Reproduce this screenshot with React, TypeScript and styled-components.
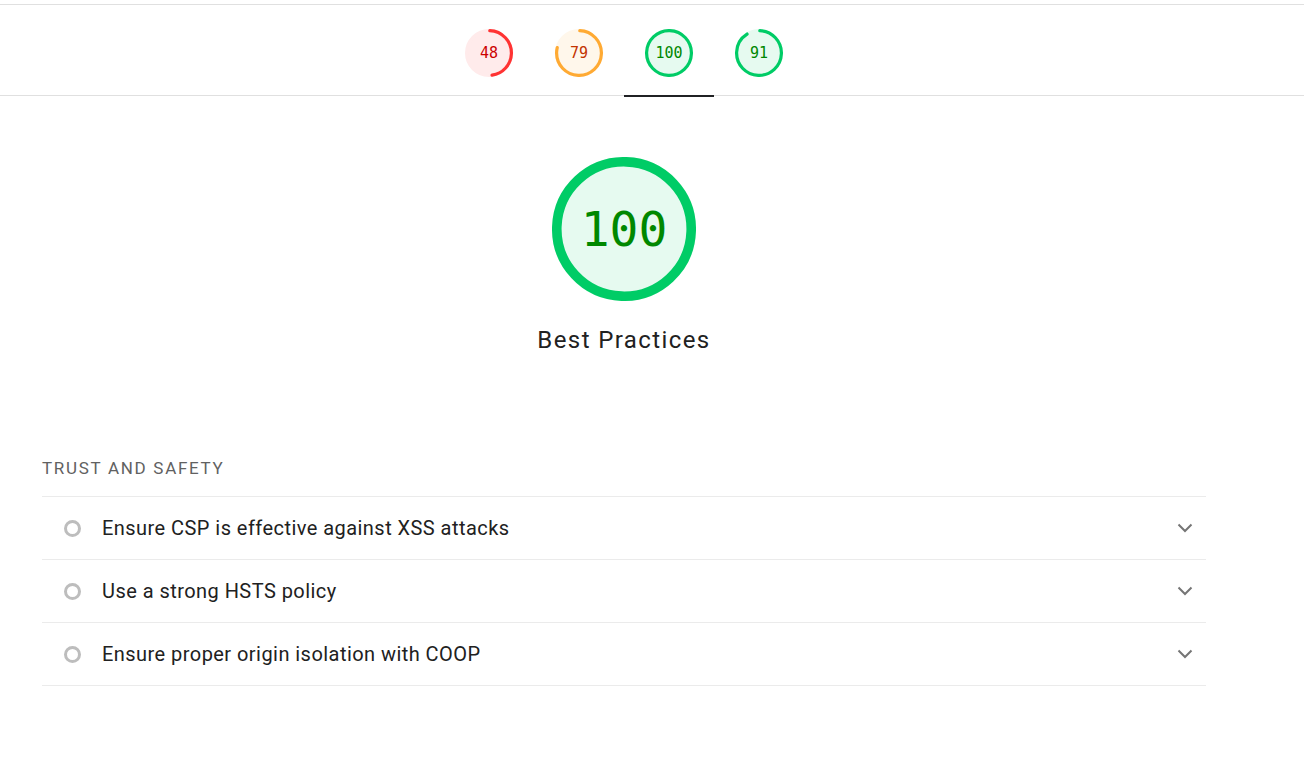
import React from "react";
import styled, { createGlobalStyle } from "styled-components";

const GlobalStyle = createGlobalStyle`
  html, body { margin: 0; padding: 0; background: #ffffff; }
  body { font-family: Roboto, "Liberation Sans", Arial, sans-serif; color: #212121; }
  * { box-sizing: border-box; }
`;

type Rating = "fail" | "average" | "pass";

const palette: Record<Rating, { arc: string; text: string; fill: string }> = {
  fail: { arc: "#ff3333", text: "#cc0000", fill: "#ffebeb" },
  average: { arc: "#ffaa33", text: "#c33300", fill: "#fff7eb" },
  pass: { arc: "#00cc66", text: "#008800", fill: "#e6faf0" },
};

const rate = (s: number): Rating => (s >= 90 ? "pass" : s >= 50 ? "average" : "fail");

const Page = styled.div`
  width: 100%;
  min-height: 774px;
  background: #ffffff;
`;

const TopRule = styled.div`
  height: 5px;
  border-bottom: 1px solid #e0e0e0;
`;

const StickyHeader = styled.header`
  height: 91px;
  border-bottom: 1px solid #e0e0e0;
`;

const HeaderInner = styled.nav`
  width: 1164px;
  margin-left: 42px;
  height: 90px;
  display: flex;
  justify-content: center;
`;

const Tab = styled.a<{ $active?: boolean }>`
  position: relative;
  width: 90px;
  height: 90px;
  display: flex;
  justify-content: center;
  padding-top: 24px;
  text-decoration: none;
  &::after {
    content: "";
    position: absolute;
    left: 0;
    right: 0;
    bottom: -2px;
    height: 2px;
    background: ${(p) => (p.$active ? "#202124" : "transparent")};
  }
`;

const GaugeWrap = styled.div<{ $size: number }>`
  position: relative;
  width: ${(p) => p.$size}px;
  height: ${(p) => p.$size}px;
  flex: none;
`;

const GaugeSvg = styled.svg`
  display: block;
  width: 100%;
  height: 100%;
`;

const GaugeLabel = styled.div<{ $color: string; $font: number }>`
  position: absolute;
  inset: 0;
  display: flex;
  align-items: center;
  justify-content: center;
  font-family: "DejaVu Sans Mono", "Liberation Mono", monospace;
  font-size: ${(p) => p.$font}px;
  color: ${(p) => p.$color};
  line-height: 1;
`;

function Gauge({ score, size, font }: { score: number; size: number; font: number }) {
  const c = palette[rate(score)];
  const r = 56;
  const sw = 8;
  const circ = 2 * Math.PI * r;
  const adj = (0.25 * sw) / circ;
  let arc = (score / 100) * circ - sw / 2;
  if (score === 100) arc = circ;
  return (
    <GaugeWrap $size={size}>
      <GaugeSvg viewBox="0 0 120 120">
        <circle cx="60" cy="60" r={r} fill={c.fill} stroke={c.fill} strokeWidth={sw} />
        <circle
          cx="60"
          cy="60"
          r={r}
          fill="none"
          stroke={c.arc}
          strokeWidth={sw}
          strokeLinecap={score === 100 ? "butt" : "round"}
          strokeDasharray={`${Math.max(arc, 0)} ${circ}`}
          transform={`rotate(${-90 + adj * 360} 60 60)`}
        />
      </GaugeSvg>
      <GaugeLabel $color={c.text} $font={font}>
        {score}
      </GaugeLabel>
    </GaugeWrap>
  );
}

const Main = styled.main`
  width: 1164px;
  margin-left: 42px;
`;

const ScoreHero = styled.section`
  display: flex;
  flex-direction: column;
  align-items: center;
  padding-top: 61px;
`;

const HeroTitle = styled.h1`
  margin: 25px 0 0;
  font-family: Roboto, "Liberation Sans", sans-serif;
  font-weight: 400;
  font-size: 24px;
  line-height: 28px;
  letter-spacing: 1.4px;
  color: #212121;
`;

const GroupTitle = styled.h2`
  margin: 102px 0 0;
  font-family: Roboto, "Liberation Sans", sans-serif;
  font-weight: 400;
  font-size: 17px;
  line-height: 25px;
  letter-spacing: 1.7px;
  text-transform: uppercase;
  color: #616161;
`;

const AuditList = styled.ul`
  list-style: none;
  margin: 15px 0 0;
  padding: 0;
  border-top: 1px solid #ebebeb;
`;

const AuditRow = styled.li`
  height: 63px;
  border-bottom: 1px solid #ebebeb;
  display: flex;
  align-items: center;
  padding-left: 22px;
  padding-right: 13px;
`;

const StatusIcon = styled.span`
  width: 17px;
  height: 17px;
  border-radius: 50%;
  border: 3px solid #bdbdbd;
  flex: none;
  margin-right: 21px;
`;

const AuditTitle = styled.span`
  flex: 1;
  font-family: Roboto, "Liberation Sans", sans-serif;
  font-size: 20px;
  letter-spacing: 0.45px;
  color: #212121;
`;

const Chevron = styled.svg`
  width: 16px;
  height: 10px;
  flex: none;
`;

const tabs = [48, 79, 100, 91];
const audits = [
  "Ensure CSP is effective against XSS attacks",
  "Use a strong HSTS policy",
  "Ensure proper origin isolation with COOP",
];

export default function App() {
  return (
    <Page>
      <GlobalStyle />
      <TopRule />
      <StickyHeader>
        <HeaderInner>
          {tabs.map((s, i) => (
            <Tab key={i} $active={i === 2}>
              <Gauge score={s} size={48} font={15} />
            </Tab>
          ))}
        </HeaderInner>
      </StickyHeader>
      <Main>
        <ScoreHero>
          <Gauge score={100} size={144} font={48} />
          <HeroTitle>Best Practices</HeroTitle>
        </ScoreHero>
        <GroupTitle>Trust and Safety</GroupTitle>
        <AuditList>
          {audits.map((a) => (
            <AuditRow key={a}>
              <StatusIcon />
              <AuditTitle>{a}</AuditTitle>
              <Chevron viewBox="0 0 16 10">
                <polyline points="1.5,1.5 8,8 14.5,1.5" fill="none" stroke="#757575" strokeWidth="2" />
              </Chevron>
            </AuditRow>
          ))}
        </AuditList>
      </Main>
    </Page>
  );
}
